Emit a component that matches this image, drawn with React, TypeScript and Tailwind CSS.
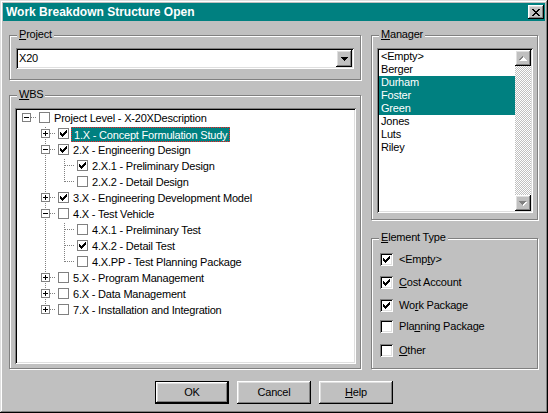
import React from "react";

// classic 3D edges
const raised =
  "shadow-[inset_-1px_-1px_#000,inset_1px_1px_#fff,inset_-2px_-2px_#808080,inset_2px_2px_#dfdfdf]";
const sunken =
  "shadow-[inset_1px_1px_#808080,inset_-1px_-1px_#fff,inset_2px_2px_#000,inset_-2px_-2px_#dfdfdf]";

type TreeNode = {
  label: string;
  level: number;
  box?: "plus" | "minus";
  checked: boolean;
  last?: boolean;
  selected?: boolean;
};

const tree: TreeNode[] = [
  { label: "Project Level - X-20XDescription", level: 0, box: "minus", checked: false },
  { label: "1.X - Concept Formulation Study", level: 1, box: "plus", checked: true, selected: true },
  { label: "2.X - Engineering Design", level: 1, box: "minus", checked: true },
  { label: "2.X.1 - Preliminary Design", level: 2, checked: true },
  { label: "2.X.2 - Detail Design", level: 2, checked: false, last: true },
  { label: "3.X - Engineering Development Model", level: 1, box: "plus", checked: true },
  { label: "4.X - Test Vehicle", level: 1, box: "minus", checked: false },
  { label: "4.X.1 - Preliminary Test", level: 2, checked: false },
  { label: "4.X.2 - Detail Test", level: 2, checked: true },
  { label: "4.X.PP - Test Planning Package", level: 2, checked: false, last: true },
  { label: "5.X - Program Management", level: 1, box: "plus", checked: false },
  { label: "6.X - Data Management", level: 1, box: "plus", checked: false },
  { label: "7.X - Installation and Integration", level: 1, box: "plus", checked: false, last: true },
];

const managers = [
  { name: "<Empty>", sel: false },
  { name: "Berger", sel: false },
  { name: "Durham", sel: true },
  { name: "Foster", sel: true },
  { name: "Green", sel: true },
  { name: "Jones", sel: false },
  { name: "Luts", sel: false },
  { name: "Riley", sel: false },
];

function CheckMark({ x = 0, y = 0, color = "#000" }: { x?: number; y?: number; color?: string }) {
  const tops = [2, 3, 4, 3, 2, 1, 0];
  return (
    <g fill={color}>
      {tops.map((t, i) => (
        <rect key={i} x={x + i} y={y + t} width={1} height={3} />
      ))}
    </g>
  );
}

function dotsV(x: number, y0: number, y1: number, key: string) {
  const out = [];
  for (let y = y0; y <= y1; y += 2) out.push(<rect key={key + y} x={x} y={y} width={1} height={1} />);
  return out;
}

function dotsH(y: number, x0: number, x1: number, key: string) {
  const out = [];
  for (let x = x0; x <= x1; x += 2) out.push(<rect key={key + x} x={x} y={y} width={1} height={1} />);
  return out;
}

function TreeGuides({ node }: { node: TreeNode }) {
  const w = 19 * (node.level + 1);
  const cx = 19 * node.level + 9;
  return (
    <svg width={w} height={16} shapeRendering="crispEdges" className="shrink-0">
      <g fill="#808080">
        {node.level === 2 && dotsV(28, 1, 15, "c")}
        {node.level > 0 && dotsV(cx, 1, node.last ? 7 : 15, "v")}
        {dotsH(7, cx + 1, w - 1, "h")}
      </g>
      {node.box && (
        <g>
          <rect x={cx - 4 + 0.5} y={3.5} width={8} height={8} fill="#fff" stroke="#808080" />
          <rect x={cx - 2} y={7} width={5} height={1} fill="#000" />
          {node.box === "plus" && <rect x={cx} y={5} width={1} height={5} fill="#000" />}
        </g>
      )}
    </svg>
  );
}

function TreeCheck({ checked }: { checked: boolean }) {
  return (
    <span className="flex h-[16px] w-[16px] shrink-0 items-center">
      <svg width={12} height={12} className="ml-[3px]" shapeRendering="crispEdges">
        <rect x={0.5} y={0.5} width={10} height={10} fill="#fff" stroke="#808080" />
        {checked && <CheckMark x={2} y={2} />}
      </svg>
    </span>
  );
}

function GroupBox({
  label,
  className,
  children,
}: {
  label: React.ReactNode;
  className: string;
  children?: React.ReactNode;
}) {
  return (
    <div className={`relative border border-[#808080] shadow-[inset_1px_1px_#fff,1px_1px_#fff] ${className}`}>
      <span className="absolute left-[7px] top-[-9px] bg-[#c0c0c0] px-[2px] leading-[14px]">{label}</span>
      {children}
    </div>
  );
}

function ScrollArrow({ up }: { up: boolean }) {
  return (
    <div className={`flex h-[16px] w-[16px] items-center justify-center bg-[#c0c0c0] ${raised}`}>
      <svg width={8} height={5} shapeRendering="crispEdges">
        {[0, 1, 2, 3].map((i) => {
          const row = up ? 3 - i : i;
          return (
            <g key={i}>
              <rect x={i + 1} y={row + 1} width={7 - 2 * i} height={1} fill="#fff" />
              <rect x={i} y={row} width={7 - 2 * i} height={1} fill="#808080" />
            </g>
          );
        })}
      </svg>
    </div>
  );
}

function OptionBox({ label, checked, className }: { label: React.ReactNode; checked: boolean; className: string }) {
  return (
    <div className={`flex h-[13px] items-center ${className}`}>
      <span className={`h-[13px] w-[13px] shrink-0 bg-white ${sunken}`}>
        {checked && (
          <svg width={13} height={13} shapeRendering="crispEdges">
            <CheckMark x={3} y={3} />
          </svg>
        )}
      </span>
      <span className="ml-[6px] leading-[13px]">{label}</span>
    </div>
  );
}

export default function App() {
  return (
    <div className="h-[413px] w-[548px] bg-[#c0c0c0] p-[3px] font-['Liberation_Sans',Arial,sans-serif] text-[11px] tracking-[-0.2px] text-black shadow-[inset_-1px_-1px_#000,inset_1px_1px_#dfdfdf,inset_-2px_-2px_#808080,inset_2px_2px_#fff]">
      {/* title bar */}
      <div className="flex h-[18px] items-center justify-between bg-[#008080] pl-[3px] pr-[1px]">
        <span className="text-[12px] font-bold tracking-normal text-white">Work Breakdown Structure Open</span>
        <button className={`flex h-[14px] w-[16px] items-center justify-center bg-[#c0c0c0] ${raised}`}>
          <svg width={8} height={7} shapeRendering="crispEdges" className="ml-[-1px]">
            {[0, 1, 2, 3, 4, 5, 6].map((r) => {
              const a = [0, 1, 2, 3, 2, 1, 0][r];
              return (
                <g key={r} fill="#000">
                  <rect x={a} y={r} width={2} height={1} />
                  <rect x={6 - a} y={r} width={2} height={1} />
                </g>
              );
            })}
          </svg>
        </button>
      </div>

      <div className="mt-[14px] flex gap-[10px] pl-[6px]">
        {/* left column */}
        <div className="flex w-[352px] flex-col gap-[15px]">
          <GroupBox label={<><u>P</u>roject</>} className="h-[45px]">
            <div className={`ml-[6px] mt-[12px] flex h-[21px] w-[338px] items-center bg-white pl-[3px] ${sunken}`}>
              <span>X20</span>
              <div className={`ml-auto mr-[2px] flex h-[17px] w-[16px] items-center justify-center bg-[#c0c0c0] ${raised}`}>
                <svg width={7} height={4} shapeRendering="crispEdges">
                  <rect x={0} y={0} width={7} height={1} />
                  <rect x={1} y={1} width={5} height={1} />
                  <rect x={2} y={2} width={3} height={1} />
                  <rect x={3} y={3} width={1} height={1} />
                </svg>
              </div>
            </div>
          </GroupBox>

          <GroupBox label={<><u>W</u>BS</>} className="h-[274px]">
            <div className={`ml-[5px] mt-[12px] h-[256px] w-[341px] bg-white p-[2px] ${sunken}`}>
              {tree.map((n) => (
                <div key={n.label} className="flex h-[16px] items-center">
                  <TreeGuides node={n} />
                  <TreeCheck checked={n.checked} />
                  <span
                    className={`h-[15px] whitespace-nowrap px-[2px] leading-[15px] ${
                      n.selected
                        ? "border border-dotted border-[#ff2020] bg-[#008080] px-[1px] leading-[13px] text-white"
                        : ""
                    }`}
                  >
                    {n.label}
                  </span>
                </div>
              ))}
            </div>
          </GroupBox>
        </div>

        {/* right column */}
        <div className="flex w-[167px] flex-col gap-[18px]">
          <GroupBox label={<><u>M</u>anager</>} className="h-[185px]">
            <div className={`ml-[5px] mt-[12px] flex h-[165px] w-[156px] bg-white p-[2px] ${sunken}`}>
              <div className="flex-1">
                {managers.map((m) => (
                  <div
                    key={m.name}
                    className={`h-[13px] pl-[2px] leading-[13px] ${m.sel ? "bg-[#008080] text-white" : ""}`}
                  >
                    {m.name}
                  </div>
                ))}
              </div>
              <div className="flex w-[16px] flex-col">
                <ScrollArrow up />
                <div className="flex-1 bg-[repeating-conic-gradient(#fff_0_25%,#c0c0c0_0_50%)] bg-[length:2px_2px]" />
                <ScrollArrow up={false} />
              </div>
            </div>
          </GroupBox>

          <GroupBox label={<><u>E</u>lement Type</>} className="h-[131px]">
            <div className="ml-[8px] flex flex-col">
              <OptionBox checked label={<>&lt;Emp<u>t</u>y&gt;</>} className="mt-[14px]" />
              <OptionBox checked label={<><u>C</u>ost Account</>} className="mt-[10px]" />
              <OptionBox checked label={<>Wo<u>r</u>k Package</>} className="mt-[10px]" />
              <OptionBox checked={false} label={<>Pla<u>n</u>ning Package</>} className="mt-[8px]" />
              <OptionBox checked={false} label={<><u>O</u>ther</>} className="mt-[11px]" />
            </div>
          </GroupBox>
        </div>
      </div>

      {/* dialog buttons */}
      <div className="mt-[12px] flex gap-[8px] pl-[152px]">
        <button className="h-[23px] w-[74px] border border-black bg-[#c0c0c0] shadow-[inset_-1px_-1px_#000,inset_1px_1px_#fff,inset_-2px_-2px_#808080,inset_2px_2px_#dfdfdf]">
          OK
        </button>
        <button className={`h-[23px] w-[74px] bg-[#c0c0c0] ${raised}`}>Cancel</button>
        <button className={`h-[23px] w-[74px] bg-[#c0c0c0] ${raised}`}>
          <u>H</u>elp
        </button>
      </div>
    </div>
  );
}
